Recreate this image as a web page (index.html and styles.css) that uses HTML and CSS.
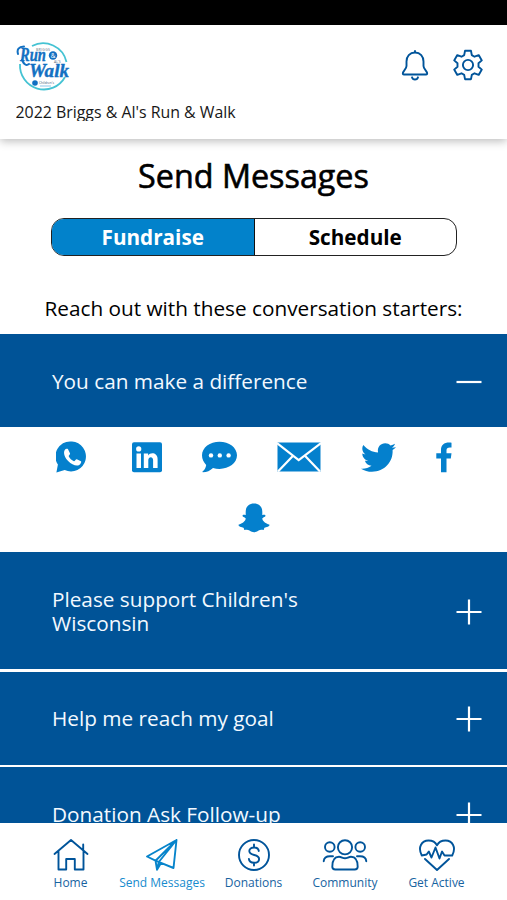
FILE: index.html
```html
<!DOCTYPE html>
<html lang="en">
<head>
<meta charset="utf-8">
<title>Send Messages</title>
<link rel="stylesheet" href="styles.css">
</head>
<body>
<div class="app">
  <div class="status-bar"></div>
  <header class="header">
    <div class="header-row">
      <svg class="logo" viewBox="0 0 60 54" width="60" height="54">
        <g fill="none" stroke="#45c3d3" stroke-width="1.8">
          <path d="M16 6A24 24 0 0 1 50.500 22"/>
          <path d="M49 37A24 24 0 0 1 4 24"/>
        </g>
        <g class="script" fill="#1270c2">
          <text x="4" y="21" font-size="18" textLength="26" lengthAdjust="spacingAndGlyphs">Run</text>
          <text x="13" y="37" font-size="19" textLength="40" lengthAdjust="spacingAndGlyphs">Walk</text>
        </g>
        <path d="M2 14Q0 7 8 6.500M6 20q3 7 7 4" fill="none" stroke="#1270c2" stroke-width="2" stroke-linecap="round"/>
        <circle cx="37" cy="15.500" r="4.200" fill="#1270c2"/>
        <text x="34.800" y="18" class="tiny" font-size="6.500" fill="#fff">&amp;</text>
        <text x="20" y="10.500" class="tiny" font-size="3.500" fill="#5d6f7d" textLength="14">BRIGGS</text>
        <text x="38" y="23" class="tiny" font-size="3.500" fill="#5d6f7d">AL'S</text>
        <circle cx="19" cy="43" r="2.800" fill="#1270c2"/>
        <text x="23" y="44" class="tiny" font-size="4" fill="#34566f" textLength="15" lengthAdjust="spacingAndGlyphs">Children's</text>
        <path d="M24 46h11" stroke="#8cc7ea"/>
      </svg>
      <div class="header-actions">
        <svg width="28" height="32" viewBox="0 0 28 32" class="line">
          <path d="M14 3.500c-5.300 0-8.500 3.800-8.500 9v4.500c0 3-3.700 5-3.700 7.500 0 .8.400 1 1 1h22.400c.6 0 1-.2 1-1 0-2.500-3.700-4.500-3.700-7.500v-4.500c0-5.200-3.200-9-8.500-9zM14 3.500V2M11 28.300c.8 3 5.200 3 6 0"/>
        </svg>
        <svg width="32" height="32" viewBox="0 0 32 32" class="line">
          <circle cx="16" cy="16" r="5.100"/>
          <path d="M13 1.800h6l.8 4.300 2.700 1.600 4.200-1.600 3.100 5.300-3.300 2.900v3.400l3.300 2.900-3.100 5.300-4.200-1.600-2.700 1.600-.8 4.300h-6l-.8-4.300-2.700-1.600-4.200 1.600-3.100-5.300 3.300-2.900v-3.400l-3.300-2.900 3.100-5.300 4.200 1.600 2.700-1.600z"/>
        </svg>
      </div>
    </div>
    <div class="event-name">2022 Briggs &amp; Al's Run &amp; Walk</div>
  </header>
  <main class="content">
    <h1>Send Messages</h1>
    <div class="tabs">
      <div class="tab active">Fundraise</div>
      <div class="tab">Schedule</div>
    </div>
    <p class="intro">Reach out with these conversation starters:</p>
    <section class="panel">
      <div class="panel-title">You can make a difference</div>
      <svg class="toggle" viewBox="0 0 26 26" width="26" height="26"><path d="M.5 13h25"/></svg>
    </section>
    <div class="share">
      <svg class="solid" width="36" height="32" viewBox="0 0 36 32">
        <path d="M16 .5a15 15 0 1 1-7.300 28.600L.4 31.400l1.500-7.800A15 15 0 0 1 16 .5z"/>
        <path class="cut" d="M8.600 9.200c1-1.400 2-1.800 3.300-1.200l2.200 4.400c.2.800-1.700 2-1.400 2.800 1 2.300 2.900 4 5.200 5 .9.300 1.900-2.300 2.900-2l4.200 2.100c.8.700-.5 3-1.800 3.700-3 1.600-7.800-.7-10.800-3.700-3.300-3.200-5.400-8-3.800-11.100z"/>
      </svg>
      <svg class="solid" width="30" height="32" viewBox="0 0 30 32">
        <rect y="1.200" width="30" height="30" rx="2"/>
        <path class="cut" d="M4.500 12.500H9V27H4.500zM11.800 12.500h4.300v2c2.400-3.700 9.500-2.900 9.500 3.500v9h-4.500v-7.700c0-4.400-4.800-4-4.800 0V27h-4.500z"/><circle class="cut" cx="6.700" cy="7.900" r="2.600"/>
      </svg>
      <svg class="solid" width="35" height="32" viewBox="0 0 35 32">
        <path d="M17.500.8C27 .8 35 6.600 35 14.300s-8 13.600-17.500 13.600c-2.300 0-4.500-.3-6.500-1-3 2.800-6 4.300-10.200 4.400-.5-.2-.5-.7 0-1 2-1.800 3-4 3.400-6.400C1.600 21.400 0 18 0 14.300 0 6.600 8 .8 17.500.8z"/>
        <g class="cut"><circle cx="9" cy="14.400" r="2.200"/><circle cx="17.800" cy="14.400" r="2.200"/><circle cx="26.600" cy="14.400" r="2.200"/></g>
      </svg>
      <svg class="solid" width="44" height="32" viewBox="0 0 44 32">
        <rect x=".5" y="1.500" width="43" height="29"/>
        <path d="M0 2l21.700 17L44 2M1 30.500l15.300-16M43 30.500l-15.300-16" fill="none" stroke="#fff" stroke-width="2.200"/>
      </svg>
      <svg class="solid" width="35" height="32" viewBox="0 0 35 32">
        <path d="M35 6.200c-1.100 1.100-2.200 2-3.400 2.900C32.300 21 23.400 30.800 11 30.800c-4 0-7.800-1-11-3.100 3.800.3 7.500-.7 10.500-3-3.300-.2-5.700-2.200-6.600-5 1.100.2 2.100.1 3.200-.1-3.500-.8-5.800-3.600-5.800-7.100 1.100.5 2 .8 3.200.9C1.300 11.200.4 7.300 2.300 4c3.800 4.500 8.900 7.200 14.800 7.500C15.900 6 19.700 2.200 24.200 2.200c2.200 0 4 .9 5.300 2.300 1.600-.3 3.200-.9 4.500-1.700-.5 1.700-1.600 3-3.100 3.900 1.400-.1 2.800-.4 4.100-.500z"/>
      </svg>
      <svg class="solid" width="16" height="32" viewBox="0 0 16 32">
        <path d="M5 31.200V17.500H.3v-5.200H5V9C5 3.600 8.500 1 15.500 1.700v4.800c-3.500-.3-5 .2-5 3v2.800h5l-.7 5.200h-4.300v13.700z"/>
      </svg>
      <svg class="solid" width="32" height="30" viewBox="0 0 32 30">
        <path d="M16 .5c5.100 0 8.300 3.500 8.300 8.200v3.200c1.200.1 2.200-.5 3 .4 1 1.100-1.600 2.100-2.900 2.900-.7 2.300 3.400 5.500 6.800 6.300 1.500 2.300-4.600 2.600-4.900 3.600l-.6 1.800c-2-.3-3.700-.5-5.100.6-3 2.300-6.100 2.300-9.100 0-1.400-1.100-3.200-.9-5.200-.6l-.6-1.800c-.3-1-6.400-1.300-4.900-3.600 3.400-.8 7.500-4 6.800-6.300-1.300-.8-3.900-1.800-2.900-2.900.8-.9 1.800-.3 3-.4V8.700C7.700 4 10.900.5 16 .5z"/>
      </svg>
    </div>
    <section class="panel tall">
      <div class="panel-title">Please support Children's Wisconsin</div>
      <svg class="toggle" viewBox="0 0 26 26" width="26" height="26"><path d="M.5 13h25M13 .5v25"/></svg>
    </section>
    <section class="panel">
      <div class="panel-title">Help me reach my goal</div>
      <svg class="toggle" viewBox="0 0 26 26" width="26" height="26"><path d="M.5 13h25M13 .5v25"/></svg>
    </section>
    <section class="panel">
      <div class="panel-title">Donation Ask Follow-up</div>
      <svg class="toggle" viewBox="0 0 26 26" width="26" height="26"><path d="M.5 13h25M13 .5v25"/></svg>
    </section>
  </main>
  <nav class="nav">
    <a class="nav-item">
      <svg class="line" width="36" height="34" viewBox="0 0 36 34"><path d="M1.500 16L18 2l16.500 14M5.500 13v18.500h7.700V21h8.600v10.500h8.700V13M30.200 12V6.500"/></svg>
      <span>Home</span>
    </a>
    <a class="nav-item current">
      <svg class="line" width="34" height="34" viewBox="0 0 34 34"><path d="M31.500 2L2 18.500l8.500 4.200L28.500 30zM31.500 2L10.500 22.700l1.500 9 4-6.600M31.500 2L13.800 24l-1.800 7.700"/></svg>
      <span>Send Messages</span>
    </a>
    <a class="nav-item">
      <svg class="line" width="34" height="34" viewBox="0 0 34 34"><circle cx="17" cy="17" r="15"/><path d="M21.800 13c-.3-2.200-2-3.500-4.700-3.500-2.900 0-4.800 1.400-4.800 3.600 0 5.300 9.800 2.500 9.800 7.900 0 2.300-2 3.800-5 3.800-3.100 0-5-1.500-5.200-3.900M17 6.500v3M17 24.800v2.700"/></svg>
      <span>Donations</span>
    </a>
    <a class="nav-item">
      <svg class="line" width="46" height="34" viewBox="0 0 46 34"><circle cx="23" cy="9.300" r="7.100"/><circle cx="7.800" cy="9" r="4.800"/><circle cx="38.200" cy="9" r="4.800"/><path d="M13.300 31.500c-2 0-3-.8-3-2.700 0-7 2.200-10 6.700-10 2.300 0 3.800 1.500 6 1.500s3.700-1.500 6-1.500c4.500 0 6.700 3 6.700 10 0 1.900-1 2.700-3 2.700zM11 18.200H8c-3.800 0-6 1.800-6.300 5M35 18.200h3c3.800 0 6 1.800 6.300 5"/></svg>
      <span>Community</span>
    </a>
    <a class="nav-item">
      <svg class="line" width="38" height="34" viewBox="0 0 38 34"><path d="M3.800 17.500C-.5 9.500 3.500 2.500 10.500 2.500c4 0 7 1.800 8.500 4.800 1.500-3 4.500-4.800 8.500-4.800 7 0 11 7 6.700 15h-7.700l-2.500-4-2.500 7-4-11-4 10-2.700-6-2.200 3zH3.800M7 21l12 11 12-11"/></svg>
      <span>Get Active</span>
    </a>
  </nav>
</div>
</body>
</html>
```
FILE: styles.css
```css
* { box-sizing: border-box; }
body { margin: 0; font-family: "Open Sans", "Noto Sans", sans-serif; color: #000; background: #fff; }
svg { display: block; flex: none; }
.app { width: 507px; height: 900px; display: flex; flex-direction: column; overflow: hidden; }
.status-bar { height: 25px; background: #000; flex: none; }
.header { height: 114px; flex: none; padding: 15px 23.500px 0 15.500px; background: #fff; box-shadow: 0 2px 9px rgba(0, 0, 0, .28); position: relative; z-index: 1; }
.header-row { display: flex; justify-content: space-between; height: 61px; }
.script { font-family: "Liberation Serif", serif; font-style: italic; font-weight: bold; stroke: #1270c2; stroke-width: .4; }
.tiny { font-family: "Open Sans", sans-serif; }
.header-actions { display: flex; gap: 23px; padding-top: 9px; }
.line { fill: none; stroke: #00549a; stroke-width: 1.9; stroke-linecap: round; stroke-linejoin: round; }
.event-name { height: 20px; overflow: hidden; font-size: 15.900px; line-height: 23px; color: #171717; }
.content { flex: 1; min-height: 0; overflow: hidden; }
h1 { margin: 16px 0 0; font-size: 32.300px; line-height: 40px; font-weight: 500; text-align: center; -webkit-text-stroke: .6px #000; }
.tabs { display: flex; width: 406px; height: 38px; margin: 23px 0 0 51px; border: 1.500px solid #222; border-radius: 13px; overflow: hidden; }
.tab { flex: 1; text-align: center; font-size: 20.700px; line-height: 37px; font-weight: 700; }
.tab.active { background: #0282cb; color: #fff; border-right: 1px solid #111; }
.intro { margin: 37px 0 11px; font-size: 20.750px; line-height: 30px; text-align: center; }
.panel { display: flex; align-items: center; justify-content: space-between; height: 93px; padding: 2px 25px 0 52px; background: #005397; color: #f3f9ff; margin-bottom: 2.500px; }
.panel.tall { height: 117px; }
.panel-title { width: 290px; padding-bottom: 2px; font-size: 20.750px; line-height: 24px; }
.toggle { stroke: #fff; stroke-width: 2.200; }
.share { display: flex; flex-wrap: wrap; justify-content: center; gap: 30px 40px; padding: 11.500px 40.500px 19px; }
.solid { fill: #0480cd; }
.cut { fill: #fff; }
.nav { height: 77px; flex: none; display: flex; justify-content: center; padding-top: 15px; background: #fff; }
.nav-item { width: 91.500px; display: flex; flex-direction: column; align-items: center; gap: 3px; font-size: 12px; line-height: 16px; color: #17639f; white-space: nowrap; }
.nav-item.current { color: #168bce; }
.current .line { stroke: #0784cb; }
```
